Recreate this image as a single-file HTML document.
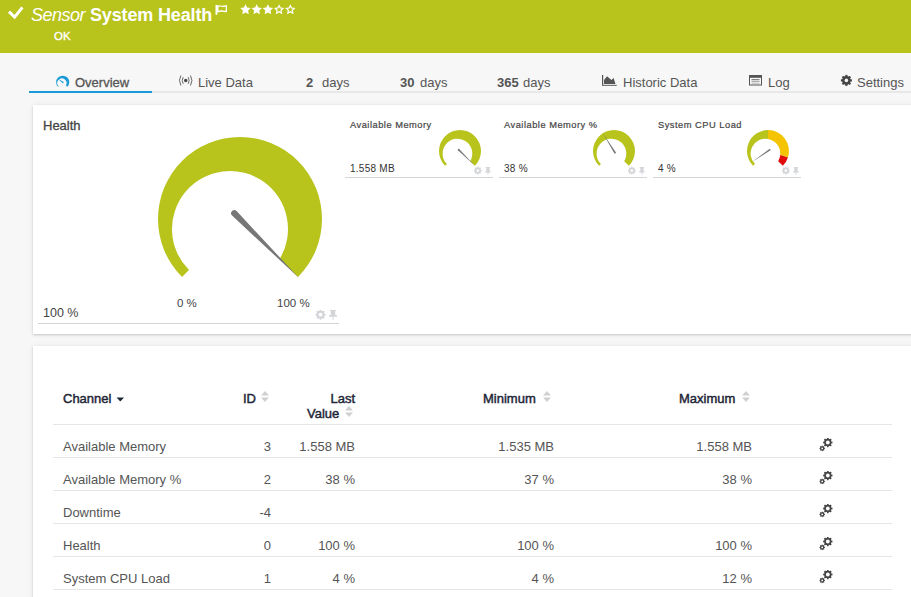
<!DOCTYPE html>
<html><head><meta charset="utf-8">
<style>
*{margin:0;padding:0;box-sizing:border-box}
html,body{width:911px;height:597px;overflow:hidden;background:#f7f7f7;font-family:"Liberation Sans",sans-serif;position:relative}
.abs{position:absolute;white-space:nowrap}
#hdr{position:absolute;left:0;top:0;width:911px;height:53px;background:#b8c31c}
.ht{color:#fff;font-size:18px;line-height:18px}
.tab{position:absolute;top:76px;font-size:13px;line-height:13px;color:#555;white-space:nowrap}
.panel{position:absolute;background:#fff;box-shadow:0 1px 2px rgba(0,0,0,.17),0 0 6px rgba(0,0,0,.07)}
.gt{position:absolute;font-size:10px;line-height:10px;color:#333;white-space:nowrap}
.th{position:absolute;font-size:13px;line-height:13px;color:#1e2536;white-space:nowrap;-webkit-text-stroke:0.45px #1e2536}
.td{position:absolute;font-size:13px;line-height:13px;color:#555;white-space:nowrap}
.r{text-align:right}
.gtt{font-size:9.3px;line-height:10px;letter-spacing:0.5px;color:#444;-webkit-text-stroke:0.2px #444}
.hl{position:absolute;left:53px;width:839px;height:1px;background:#e6e6e6}
.gl{position:absolute;height:1px;background:#d4d4d4}
</style></head><body>
<div id="hdr">
  <svg class="abs" style="left:0px;top:0px" width="30" height="24" viewBox="0 0 30 24"><path d="M9 11.6 L14.6 17.1 L22.4 7.4" stroke="#fff" stroke-width="3" fill="none"/></svg>
  <div class="abs ht" style="left:31px;top:6px;font-style:italic;letter-spacing:-0.5px">Sensor</div>
  <div class="abs ht" style="left:90px;top:6px;font-weight:bold;letter-spacing:-0.15px">System Health</div>
  <svg class="abs" style="left:210px;top:0px" width="20" height="16" viewBox="0 0 20 16"><rect x="5.5" y="5" width="1.8" height="9.8" fill="#fff"/><path fill="#fff" fill-rule="evenodd" d="M7 5.4 C9.5 4.6 11.5 6.2 14 5.6 L17 5 V12 C14.5 12.8 12.5 11.2 10 11.9 L7 12.4 Z M8.5 6.7 C10.5 6.1 12 7.5 14.2 6.9 L15.7 6.6 V10.6 C13.5 11.2 12 9.9 9.8 10.5 L8.5 10.8 Z"/></svg>
  <svg class="abs" style="left:0;top:0" width="320" height="20" viewBox="0 0 320 20"><path d="M245.50 4.20 L247.12 7.48 L250.73 8.00 L248.12 10.55 L248.73 14.15 L245.50 12.45 L242.27 14.15 L242.88 10.55 L240.27 8.00 L243.88 7.48 Z" fill="#fff"/><path d="M256.70 4.20 L258.32 7.48 L261.93 8.00 L259.32 10.55 L259.93 14.15 L256.70 12.45 L253.47 14.15 L254.08 10.55 L251.47 8.00 L255.08 7.48 Z" fill="#fff"/><path d="M267.90 4.20 L269.52 7.48 L273.13 8.00 L270.52 10.55 L271.13 14.15 L267.90 12.45 L264.67 14.15 L265.28 10.55 L262.67 8.00 L266.28 7.48 Z" fill="#fff"/><path d="M279.10 4.20 L280.72 7.48 L284.33 8.00 L281.72 10.55 L282.33 14.15 L279.10 12.45 L275.87 14.15 L276.48 10.55 L273.87 8.00 L277.48 7.48 Z M279.10 6.95 L279.91 8.59 L281.72 8.85 L280.41 10.12 L280.72 11.92 L279.10 11.07 L277.48 11.92 L277.79 10.12 L276.48 8.85 L278.29 8.59 Z" fill="#fff" fill-rule="evenodd"/><path d="M290.30 4.20 L291.92 7.48 L295.53 8.00 L292.92 10.55 L293.53 14.15 L290.30 12.45 L287.07 14.15 L287.68 10.55 L285.07 8.00 L288.68 7.48 Z M290.30 6.95 L291.11 8.59 L292.92 8.85 L291.61 10.12 L291.92 11.92 L290.30 11.07 L288.68 11.92 L288.99 10.12 L287.68 8.85 L289.49 8.59 Z" fill="#fff" fill-rule="evenodd"/></svg>
  <div class="abs" style="left:54px;top:30px;color:#fff;font-size:11.5px;line-height:12px;-webkit-text-stroke:0.35px #fff">OK</div>
</div>
<!-- tabs -->
<div class="abs" style="left:29px;top:91px;width:882px;height:2px;background:#e8e8e8"></div>
<div class="abs" style="left:29px;top:91px;width:123px;height:2px;background:#1a9ad6"></div>
<svg class="abs" style="left:54px;top:74px" width="18" height="14" viewBox="0 0 18 14"><path fill="#1a9ad6" d="M4.06 12.84 A6.56 6.56 0 1 1 13.34 12.84 L11.88 11.38 A4.64 4.64 0 1 0 4.62 12.28 Z"/>
<path fill="#1a9ad6" d="M9.38 7.77 L4.17 4.91 L8.50 8.98 A0.75 0.75 0 0 0 9.38 7.77 Z"/></svg>
<div class="tab" style="left:75px;-webkit-text-stroke:0.3px #555">Overview</div>
<svg class="abs" style="left:177px;top:74px" width="18" height="14" viewBox="0 0 18 14"><g fill="none" stroke="#666" stroke-width="1.0"><path d="M6.2 3.2 A6.5 6.5 0 0 0 6.2 9.8"/><path d="M11.2 3.2 A6.5 6.5 0 0 1 11.2 9.8"/><path d="M3.9 1.5 A10 10 0 0 0 3.9 11.5"/><path d="M13.5 1.5 A10 10 0 0 1 13.5 11.5"/></g><circle cx="8.7" cy="6.5" r="1.7" fill="#444"/></svg>
<div class="tab" style="left:198px">Live Data</div>
<div class="tab" style="left:306px"><b>2</b></div><div class="tab" style="left:322px">days</div>
<div class="tab" style="left:400px"><b>30</b></div><div class="tab" style="left:420px">days</div>
<div class="tab" style="left:497px"><b>365</b></div><div class="tab" style="left:523px">days</div>
<svg class="abs" style="left:600px;top:74px" width="18" height="13" viewBox="0 0 18 13"><rect x="2" y="1" width="1.2" height="11" fill="#555"/><rect x="2" y="10.8" width="14.8" height="1.2" fill="#777"/><path fill="#555" d="M4 10 V6 L7 2.2 L11.4 6 L13.6 4 L15.4 9.8 V10 Z"/></svg>
<div class="tab" style="left:623px">Historic Data</div>
<svg class="abs" style="left:748px;top:74px" width="16" height="12" viewBox="0 0 16 12"><rect x="1.5" y="1.5" width="12" height="9.5" fill="none" stroke="#555" stroke-width="1"/><rect x="1" y="1" width="13" height="2.8" fill="#555"/><rect x="3.5" y="5.2" width="8" height="1" fill="#666"/><rect x="3.5" y="7.2" width="8" height="1" fill="#999"/><rect x="3.5" y="9" width="8" height="1" fill="#ccc"/></svg>
<div class="tab" style="left:768px">Log</div>
<svg class="abs" style="left:840px;top:74px" width="13" height="13" viewBox="0 0 13 13"><g fill="#444"><circle cx="6.4" cy="6.4" r="4.3"/><rect x="5.3" y="0.9" width="2.2" height="11" transform="rotate(0 6.4 6.4)"/><rect x="5.3" y="0.9" width="2.2" height="11" transform="rotate(45 6.4 6.4)"/><rect x="5.3" y="0.9" width="2.2" height="11" transform="rotate(90 6.4 6.4)"/><rect x="5.3" y="0.9" width="2.2" height="11" transform="rotate(135 6.4 6.4)"/></g><circle cx="6.4" cy="6.4" r="1.8" fill="#f5f5f5"/></svg>
<div class="tab" style="left:857px">Settings</div>

<div class="panel" style="left:33px;top:105px;width:890px;height:229px"></div>
<div class="abs" style="left:43px;top:119px;font-size:13px;line-height:13px;color:#444;-webkit-text-stroke:0.3px #444">Health</div>
<svg class="abs" style="left:0;top:0" width="911" height="340" viewBox="0 0 911 340">
<path fill="#b8c31c" d="M182.02 276.98 A82.00 82.00 0 1 1 297.98 276.98 L279.77 258.77 A58.00 58.00 0 1 0 188.99 270.01 Z"/>
<path fill="#777" d="M232.08 215.61 L299.04 278.04 L236.61 211.08 A3.20 3.20 0 0 0 232.08 215.61 Z"/>
<path fill="#b8c31c" d="M445.16 165.84 A20.99 20.99 0 1 1 474.84 165.84 L470.18 161.18 A14.85 14.85 0 1 0 446.94 164.06 Z"/>
<path fill="#777" d="M457.95 150.22 L474.84 165.84 L459.22 148.95 A0.90 0.90 0 0 0 457.95 150.22 Z"/>
<path fill="#b8c31c" d="M599.16 165.84 A20.99 20.99 0 1 1 628.84 165.84 L624.18 161.18 A14.85 14.85 0 1 0 600.94 164.06 Z"/>
<path fill="#777" d="M615.83 152.21 L602.75 133.28 L614.31 153.17 A0.90 0.90 0 0 0 615.83 152.21 Z"/>
<path fill="#b8c31c" d="M753.16 165.84 A20.99 20.99 0 0 1 768.00 130.01 L768.00 138.93 A14.85 14.85 0 0 0 754.94 164.06 Z"/>
<path fill="#f5c400" d="M768.00 130.01 A20.99 20.99 0 0 1 787.96 157.49 L780.22 154.97 A14.85 14.85 0 0 0 768.00 138.93 Z"/>
<path fill="#e00b0b" d="M787.96 157.49 A20.99 20.99 0 0 1 782.84 165.84 L778.18 161.18 A14.85 14.85 0 0 0 780.22 154.97 Z"/>
<path fill="#777" d="M769.15 149.13 L752.29 161.68 L770.16 150.62 A0.90 0.90 0 0 0 769.15 149.13 Z"/>
</svg>
<div class="abs" style="left:177px;top:297px;font-size:11.5px;line-height:12px;color:#444">0 %</div>
<div class="abs" style="left:277px;top:297px;font-size:11.5px;line-height:12px;color:#444">100 %</div>
<div class="abs" style="left:43px;top:307px;font-size:12.5px;line-height:13px;color:#444">100 %</div>
<div class="gl" style="left:38px;top:323px;width:301px"></div>
<svg class="abs" style="left:315px;top:310px" width="24" height="11" viewBox="0 0 24 11">
<g fill="#d3d5d8"><circle cx="5.5" cy="4.7" r="3.9"/><rect x="4.55" y="-0.30" width="1.9" height="10.00" transform="rotate(0 5.5 4.7)"/><rect x="4.55" y="-0.30" width="1.9" height="10.00" transform="rotate(45 5.5 4.7)"/><rect x="4.55" y="-0.30" width="1.9" height="10.00" transform="rotate(90 5.5 4.7)"/><rect x="4.55" y="-0.30" width="1.9" height="10.00" transform="rotate(135 5.5 4.7)"/><path d="M15.0 0 H21.0 V1 H20.2 V5 L22 5.2 V6.7 H18.5 V9.7 H17.5 V6.7 H14 V5.2 L15.8 5 V1 H15.0 Z"/></g><circle cx="5.5" cy="4.7" r="1.9" fill="#fff"/></svg>

<div class="gt gtt" style="left:350px;top:120px">Available Memory</div>
<div class="gt" style="left:350px;top:163px;font-size:10px;line-height:11px;letter-spacing:0.25px">1.558 MB</div>
<div class="gl" style="left:345px;top:177px;width:148px"></div>
<svg class="abs" style="left:473px;top:166px" width="24" height="11" viewBox="0 0 24 11">
<g fill="#d3d5d8"><circle cx="4.8" cy="4.6" r="3.0"/><rect x="4.05" y="0.70" width="1.5" height="7.80" transform="rotate(0 4.8 4.6)"/><rect x="4.05" y="0.70" width="1.5" height="7.80" transform="rotate(45 4.8 4.6)"/><rect x="4.05" y="0.70" width="1.5" height="7.80" transform="rotate(90 4.8 4.6)"/><rect x="4.05" y="0.70" width="1.5" height="7.80" transform="rotate(135 4.8 4.6)"/><path d="M12.6 0.9 H17.3 V1.8 H16.6 V5.2 L17.8 5.4 V6.6 H15.4 V8.7 H14.5 V6.6 H12.1 V5.4 L13.3 5.2 V1.8 H12.6 Z"/></g><circle cx="4.8" cy="4.6" r="1.3" fill="#fff"/></svg>
<div class="gt gtt" style="left:504px;top:120px">Available Memory %</div>
<div class="gt" style="left:504px;top:163px;font-size:10px;line-height:11px;letter-spacing:0.25px">38 %</div>
<div class="gl" style="left:499px;top:177px;width:148px"></div>
<svg class="abs" style="left:627px;top:166px" width="24" height="11" viewBox="0 0 24 11">
<g fill="#d3d5d8"><circle cx="4.8" cy="4.6" r="3.0"/><rect x="4.05" y="0.70" width="1.5" height="7.80" transform="rotate(0 4.8 4.6)"/><rect x="4.05" y="0.70" width="1.5" height="7.80" transform="rotate(45 4.8 4.6)"/><rect x="4.05" y="0.70" width="1.5" height="7.80" transform="rotate(90 4.8 4.6)"/><rect x="4.05" y="0.70" width="1.5" height="7.80" transform="rotate(135 4.8 4.6)"/><path d="M12.6 0.9 H17.3 V1.8 H16.6 V5.2 L17.8 5.4 V6.6 H15.4 V8.7 H14.5 V6.6 H12.1 V5.4 L13.3 5.2 V1.8 H12.6 Z"/></g><circle cx="4.8" cy="4.6" r="1.3" fill="#fff"/></svg>
<div class="gt gtt" style="left:658px;top:120px">System CPU Load</div>
<div class="gt" style="left:658px;top:163px;font-size:10px;line-height:11px;letter-spacing:0.25px">4 %</div>
<div class="gl" style="left:653px;top:177px;width:148px"></div>
<svg class="abs" style="left:781px;top:166px" width="24" height="11" viewBox="0 0 24 11">
<g fill="#d3d5d8"><circle cx="4.8" cy="4.6" r="3.0"/><rect x="4.05" y="0.70" width="1.5" height="7.80" transform="rotate(0 4.8 4.6)"/><rect x="4.05" y="0.70" width="1.5" height="7.80" transform="rotate(45 4.8 4.6)"/><rect x="4.05" y="0.70" width="1.5" height="7.80" transform="rotate(90 4.8 4.6)"/><rect x="4.05" y="0.70" width="1.5" height="7.80" transform="rotate(135 4.8 4.6)"/><path d="M12.6 0.9 H17.3 V1.8 H16.6 V5.2 L17.8 5.4 V6.6 H15.4 V8.7 H14.5 V6.6 H12.1 V5.4 L13.3 5.2 V1.8 H12.6 Z"/></g><circle cx="4.8" cy="4.6" r="1.3" fill="#fff"/></svg>

<div class="panel" style="left:33px;top:346px;width:890px;height:260px"></div>
<div class="th" style="left:63px;top:392px">Channel</div>
<svg class="abs" style="left:116px;top:397px" width="9" height="5" viewBox="0 0 9 5"><path d="M0.5 0.5 H8 L4.25 4.5 Z" fill="#1e2536"/></svg>
<div class="th" style="left:243px;top:392px">ID</div>
<svg class="abs" style="left:261px;top:391px" width="8" height="11" viewBox="0 0 8 11"><path fill="#d0d0d0" d="M4 0 L8 4.5 H0 Z M0 6.5 H8 L4 11 Z"/></svg>
<div class="th r" style="right:556px;top:392px">Last</div>
<div class="th" style="left:307px;top:407px">Value</div>
<svg class="abs" style="left:345px;top:406px" width="8" height="11" viewBox="0 0 8 11"><path fill="#d0d0d0" d="M4 0 L8 4.5 H0 Z M0 6.5 H8 L4 11 Z"/></svg>
<div class="th" style="left:483px;top:392px">Minimum</div>
<svg class="abs" style="left:543px;top:391px" width="8" height="11" viewBox="0 0 8 11"><path fill="#d0d0d0" d="M4 0 L8 4.5 H0 Z M0 6.5 H8 L4 11 Z"/></svg>
<div class="th" style="left:679px;top:392px">Maximum</div>
<svg class="abs" style="left:742px;top:391px" width="8" height="11" viewBox="0 0 8 11"><path fill="#d0d0d0" d="M4 0 L8 4.5 H0 Z M0 6.5 H8 L4 11 Z"/></svg>
<div class="hl" style="top:424px"></div>
<div class="td" style="left:63px;top:440px">Available Memory</div><div class="td r" style="right:640px;top:440px">3</div><div class="td r" style="right:556px;top:440px">1.558 MB</div><div class="td r" style="right:357px;top:440px">1.535 MB</div><div class="td r" style="right:159px;top:440px">1.558 MB</div><svg class="abs" style="left:819px;top:438px" width="16" height="15" viewBox="0 0 16 15"><circle cx="8.8" cy="4.5" r="3.67" fill="#444"/><rect x="8.00" y="-0.20" width="1.6" height="9.40" fill="#444" transform="rotate(0.0 8.8 4.5)"/><rect x="8.00" y="-0.20" width="1.6" height="9.40" fill="#444" transform="rotate(45.0 8.8 4.5)"/><rect x="8.00" y="-0.20" width="1.6" height="9.40" fill="#444" transform="rotate(90.0 8.8 4.5)"/><rect x="8.00" y="-0.20" width="1.6" height="9.40" fill="#444" transform="rotate(135.0 8.8 4.5)"/><circle cx="8.8" cy="4.5" r="1.9" fill="#fff"/><circle cx="3.2" cy="10.4" r="2.11" fill="#444"/><rect x="2.65" y="7.70" width="1.1" height="5.40" fill="#444" transform="rotate(0.0 3.2 10.4)"/><rect x="2.65" y="7.70" width="1.1" height="5.40" fill="#444" transform="rotate(45.0 3.2 10.4)"/><rect x="2.65" y="7.70" width="1.1" height="5.40" fill="#444" transform="rotate(90.0 3.2 10.4)"/><rect x="2.65" y="7.70" width="1.1" height="5.40" fill="#444" transform="rotate(135.0 3.2 10.4)"/><circle cx="3.2" cy="10.4" r="0.9" fill="#fff"/></svg><div class="hl" style="top:457px"></div><div class="td" style="left:63px;top:473px">Available Memory %</div><div class="td r" style="right:640px;top:473px">2</div><div class="td r" style="right:556px;top:473px">38 %</div><div class="td r" style="right:357px;top:473px">37 %</div><div class="td r" style="right:159px;top:473px">38 %</div><svg class="abs" style="left:819px;top:471px" width="16" height="15" viewBox="0 0 16 15"><circle cx="8.8" cy="4.5" r="3.67" fill="#444"/><rect x="8.00" y="-0.20" width="1.6" height="9.40" fill="#444" transform="rotate(0.0 8.8 4.5)"/><rect x="8.00" y="-0.20" width="1.6" height="9.40" fill="#444" transform="rotate(45.0 8.8 4.5)"/><rect x="8.00" y="-0.20" width="1.6" height="9.40" fill="#444" transform="rotate(90.0 8.8 4.5)"/><rect x="8.00" y="-0.20" width="1.6" height="9.40" fill="#444" transform="rotate(135.0 8.8 4.5)"/><circle cx="8.8" cy="4.5" r="1.9" fill="#fff"/><circle cx="3.2" cy="10.4" r="2.11" fill="#444"/><rect x="2.65" y="7.70" width="1.1" height="5.40" fill="#444" transform="rotate(0.0 3.2 10.4)"/><rect x="2.65" y="7.70" width="1.1" height="5.40" fill="#444" transform="rotate(45.0 3.2 10.4)"/><rect x="2.65" y="7.70" width="1.1" height="5.40" fill="#444" transform="rotate(90.0 3.2 10.4)"/><rect x="2.65" y="7.70" width="1.1" height="5.40" fill="#444" transform="rotate(135.0 3.2 10.4)"/><circle cx="3.2" cy="10.4" r="0.9" fill="#fff"/></svg><div class="hl" style="top:490px"></div><div class="td" style="left:63px;top:506px">Downtime</div><div class="td r" style="right:640px;top:506px">-4</div><div class="td r" style="right:556px;top:506px"></div><div class="td r" style="right:357px;top:506px"></div><div class="td r" style="right:159px;top:506px"></div><svg class="abs" style="left:819px;top:504px" width="16" height="15" viewBox="0 0 16 15"><circle cx="8.8" cy="4.5" r="3.67" fill="#444"/><rect x="8.00" y="-0.20" width="1.6" height="9.40" fill="#444" transform="rotate(0.0 8.8 4.5)"/><rect x="8.00" y="-0.20" width="1.6" height="9.40" fill="#444" transform="rotate(45.0 8.8 4.5)"/><rect x="8.00" y="-0.20" width="1.6" height="9.40" fill="#444" transform="rotate(90.0 8.8 4.5)"/><rect x="8.00" y="-0.20" width="1.6" height="9.40" fill="#444" transform="rotate(135.0 8.8 4.5)"/><circle cx="8.8" cy="4.5" r="1.9" fill="#fff"/><circle cx="3.2" cy="10.4" r="2.11" fill="#444"/><rect x="2.65" y="7.70" width="1.1" height="5.40" fill="#444" transform="rotate(0.0 3.2 10.4)"/><rect x="2.65" y="7.70" width="1.1" height="5.40" fill="#444" transform="rotate(45.0 3.2 10.4)"/><rect x="2.65" y="7.70" width="1.1" height="5.40" fill="#444" transform="rotate(90.0 3.2 10.4)"/><rect x="2.65" y="7.70" width="1.1" height="5.40" fill="#444" transform="rotate(135.0 3.2 10.4)"/><circle cx="3.2" cy="10.4" r="0.9" fill="#fff"/></svg><div class="hl" style="top:523px"></div><div class="td" style="left:63px;top:539px">Health</div><div class="td r" style="right:640px;top:539px">0</div><div class="td r" style="right:556px;top:539px">100 %</div><div class="td r" style="right:357px;top:539px">100 %</div><div class="td r" style="right:159px;top:539px">100 %</div><svg class="abs" style="left:819px;top:537px" width="16" height="15" viewBox="0 0 16 15"><circle cx="8.8" cy="4.5" r="3.67" fill="#444"/><rect x="8.00" y="-0.20" width="1.6" height="9.40" fill="#444" transform="rotate(0.0 8.8 4.5)"/><rect x="8.00" y="-0.20" width="1.6" height="9.40" fill="#444" transform="rotate(45.0 8.8 4.5)"/><rect x="8.00" y="-0.20" width="1.6" height="9.40" fill="#444" transform="rotate(90.0 8.8 4.5)"/><rect x="8.00" y="-0.20" width="1.6" height="9.40" fill="#444" transform="rotate(135.0 8.8 4.5)"/><circle cx="8.8" cy="4.5" r="1.9" fill="#fff"/><circle cx="3.2" cy="10.4" r="2.11" fill="#444"/><rect x="2.65" y="7.70" width="1.1" height="5.40" fill="#444" transform="rotate(0.0 3.2 10.4)"/><rect x="2.65" y="7.70" width="1.1" height="5.40" fill="#444" transform="rotate(45.0 3.2 10.4)"/><rect x="2.65" y="7.70" width="1.1" height="5.40" fill="#444" transform="rotate(90.0 3.2 10.4)"/><rect x="2.65" y="7.70" width="1.1" height="5.40" fill="#444" transform="rotate(135.0 3.2 10.4)"/><circle cx="3.2" cy="10.4" r="0.9" fill="#fff"/></svg><div class="hl" style="top:556px"></div><div class="td" style="left:63px;top:572px">System CPU Load</div><div class="td r" style="right:640px;top:572px">1</div><div class="td r" style="right:556px;top:572px">4 %</div><div class="td r" style="right:357px;top:572px">4 %</div><div class="td r" style="right:159px;top:572px">12 %</div><svg class="abs" style="left:819px;top:570px" width="16" height="15" viewBox="0 0 16 15"><circle cx="8.8" cy="4.5" r="3.67" fill="#444"/><rect x="8.00" y="-0.20" width="1.6" height="9.40" fill="#444" transform="rotate(0.0 8.8 4.5)"/><rect x="8.00" y="-0.20" width="1.6" height="9.40" fill="#444" transform="rotate(45.0 8.8 4.5)"/><rect x="8.00" y="-0.20" width="1.6" height="9.40" fill="#444" transform="rotate(90.0 8.8 4.5)"/><rect x="8.00" y="-0.20" width="1.6" height="9.40" fill="#444" transform="rotate(135.0 8.8 4.5)"/><circle cx="8.8" cy="4.5" r="1.9" fill="#fff"/><circle cx="3.2" cy="10.4" r="2.11" fill="#444"/><rect x="2.65" y="7.70" width="1.1" height="5.40" fill="#444" transform="rotate(0.0 3.2 10.4)"/><rect x="2.65" y="7.70" width="1.1" height="5.40" fill="#444" transform="rotate(45.0 3.2 10.4)"/><rect x="2.65" y="7.70" width="1.1" height="5.40" fill="#444" transform="rotate(90.0 3.2 10.4)"/><rect x="2.65" y="7.70" width="1.1" height="5.40" fill="#444" transform="rotate(135.0 3.2 10.4)"/><circle cx="3.2" cy="10.4" r="0.9" fill="#fff"/></svg><div class="hl" style="top:589px"></div>
</body></html>
